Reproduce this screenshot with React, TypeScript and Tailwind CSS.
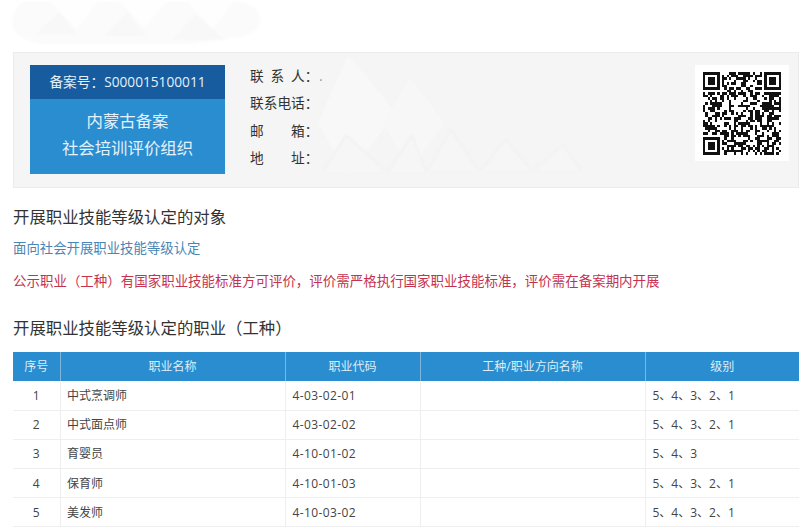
const FONT = "font-['Open_Sans','Noto_Sans_CJK_SC',sans-serif]";

const occupations = [
    { no: 1, name: '中式烹调师', code: '4-03-02-01', levels: '5、4、3、2、1' },
    { no: 2, name: '中式面点师', code: '4-03-02-02', levels: '5、4、3、2、1' },
    { no: 3, name: '育婴员', code: '4-10-01-02', levels: '5、4、3' },
    { no: 4, name: '保育师', code: '4-10-01-03', levels: '5、4、3、2、1' },
    { no: 5, name: '美发师', code: '4-10-03-02', levels: '5、4、3、2、1' },
];

const contacts = [
    { label: '联\u2002系\u2002人\uFF1A', value: '.' },
    { label: '联系电话\uFF1A', value: '' },
    { label: '邮\u3000\u3000箱\uFF1A', value: '' },
    { label: '地\u3000\u3000址\uFF1A', value: '' },
];

// 二维码 모듈 - 고정 시드로 생성
const QR_SIZE = 33;

const isFinder = (x: number, y: number) =>
    (x < 8 && y < 8) || (x >= QR_SIZE - 8 && y < 8) || (x < 8 && y >= QR_SIZE - 8);

const finderOn = (x: number, y: number) => {
    const fx = x >= QR_SIZE - 8 ? x - (QR_SIZE - 7) : x;
    const fy = y >= QR_SIZE - 8 ? y - (QR_SIZE - 7) : y;
    if (fx < 0 || fy < 0 || fx > 6 || fy > 6) return false;
    if (fx === 0 || fy === 0 || fx === 6 || fy === 6) return true;
    return fx >= 2 && fx <= 4 && fy >= 2 && fy <= 4;
};

const qrModules = () => {
    const cells: { x: number; y: number }[] = [];
    let seed = 20240511;
    for (let y = 0; y < QR_SIZE; y++) {
        for (let x = 0; x < QR_SIZE; x++) {
            seed = (seed * 1103515245 + 12345) & 0x7fffffff;
            const on = isFinder(x, y) ? finderOn(x, y) : (seed >> 16) % 100 < 52;
            if (on) cells.push({ x, y });
        }
    }
    return cells;
};

const QrCode = () => (
    <div className="flex h-[96px] w-[94px] shrink-0 items-center justify-center bg-white">
        <svg
            viewBox={`0 0 ${QR_SIZE} ${QR_SIZE}`}
            width="78"
            height="83"
            preserveAspectRatio="none"
            shapeRendering="crispEdges"
            className="blur-[0.4px]"
        >
            {qrModules().map((c) => (
                <rect key={`${c.x}-${c.y}`} x={c.x} y={c.y} width="1" height="1" fill="#111" />
            ))}
        </svg>
    </div>
);

// 카드 뒤 옅은 삼각형 무늬
const CardPattern = () => (
    <svg
        className="pointer-events-none absolute left-[300px] top-0 blur-[1px]"
        width="300"
        height="135"
        viewBox="0 0 300 135"
    >
        <path d="M34 2 L82 60 L34 122 L4 70Z" fill="#f8f8f8" />
        <path d="M96 24 L130 70 L96 118 L70 70Z" fill="#f7f7f7" />
        <g fill="#f6f6f6" stroke="#f0f0f0" strokeWidth="1.5">
            <path d="M9 119 L32 82 L72 119" />
            <path d="M74 119 L98 82 L112 119" />
            <path d="M114 117 L137 77 L164 117" />
            <path d="M167 117 L192 87 L217 117" />
            <path d="M220 117 L249 92 L267 117" />
        </g>
    </svg>
);

// 상단 옅은 워터마크
const TopWatermark = () => (
    <svg
        className="pointer-events-none absolute left-0 top-0 blur-[1px]"
        width="270"
        height="48"
        viewBox="0 0 270 48"
    >
        <path d="M22 2 H240 Q262 6 260 22 Q256 36 232 38 L190 44 H40 Q10 38 12 20 Q14 8 22 2Z" fill="#fbfbfb" />
        <path d="M48 0 L76 30 L100 0Z" fill="#fefefe" />
        <path d="M118 0 L144 28 L168 0Z" fill="#fefefe" />
        <path d="M186 0 L212 30 L236 0Z" fill="#fefefe" />
        <path d="M36 34 L60 12 L76 34Z" fill="#f8f8f8" />
        <path d="M104 36 L128 12 L146 36Z" fill="#f8f8f8" />
        <path d="M172 40 L196 14 L224 40Z" fill="#f8f8f8" />
    </svg>
);

const Header = ({ children, className = '' }: { children: React.ReactNode; className?: string }) => (
    <th className={`border-r border-[#7db7de] bg-[#2a8dd0] text-[12px] font-normal text-[#dcedf8] ${className}`}>
        {children}
    </th>
);

const Cell = ({ children, className = '' }: { children?: React.ReactNode; className?: string }) => (
    <td className={`border-r border-b border-[#eeeeee] pt-[1px] text-[12px] text-[#444] ${className}`}>{children}</td>
);

export default function App() {
    return (
        <div className={`relative h-[527px] w-[800px] overflow-hidden bg-white pl-[13px] pt-[52px] ${FONT}`}>
            <TopWatermark />

            <div className="relative flex h-[136px] w-[786px] items-start border border-[#ebebeb] bg-[#f5f5f5] pl-[16px] pr-[9px] pt-[12px]">
                <CardPattern />
                <div className="relative flex h-[109px] w-[195px] shrink-0 flex-col bg-[#2a8dd0] text-center text-[#e4f1fa]">
                    <div className="flex h-[34px] items-center justify-center bg-[#175c9f] text-[13.7px]">
                        {'备案号\uFF1AS000015100011'}
                    </div>
                    <div className="flex flex-1 flex-col items-center justify-center pb-[5px] text-[16.4px] leading-[27px]">
                        <p>内蒙古备案</p>
                        <p>社会培训评价组织</p>
                    </div>
                </div>

                <ul className="relative ml-[25px] flex flex-col gap-[5.3px] text-[13.7px] leading-[22px] text-[#333]">
                    {contacts.map((c) => (
                        <li key={c.label} className="flex whitespace-pre">
                            <span className="w-[69px]">{c.label}</span>
                            <span className="text-[#999]">{c.value}</span>
                        </li>
                    ))}
                </ul>

                <div className="relative ml-auto">
                    <QrCode />
                </div>
            </div>

            <h2 className="mt-[18px] text-[16.4px] leading-[22px] text-[#333]">开展职业技能等级认定的对象</h2>
            <p className="mt-[10px] text-[13.4px] leading-[20px] text-[#4a85b5]">面向社会开展职业技能等级认定</p>
            <p className="mt-[13px] text-[13.47px] leading-[20px] text-[#c5324f]">
                {'公示职业\uFF08工种\uFF09有国家职业技能标准方可评价\uFF0C评价需严格执行国家职业技能标准\uFF0C评价需在备案期内开展'}
            </p>
            <h2 className="mt-[26px] text-[16.4px] leading-[22px] text-[#333]">
                {'开展职业技能等级认定的职业\uFF08工种\uFF09'}
            </h2>

            <table className="mt-[13px] w-[786px] table-fixed border-collapse">
                <colgroup>
                    <col className="w-[47px]" />
                    <col className="w-[225px]" />
                    <col className="w-[135px]" />
                    <col className="w-[225px]" />
                    <col />
                </colgroup>
                <thead>
                    <tr className="h-[29px]">
                        <Header>序号</Header>
                        <Header>职业名称</Header>
                        <Header>职业代码</Header>
                        <Header>工种/职业方向名称</Header>
                        <Header className="border-r-0">级别</Header>
                    </tr>
                </thead>
                <tbody>
                    {occupations.map((o) => (
                        <tr key={o.no} className="h-[29.2px]">
                            <Cell className="text-center">{o.no}</Cell>
                            <Cell className="pl-[6.5px]">{o.name}</Cell>
                            <Cell className="pl-[7px] tracking-[0.4px]">{o.code}</Cell>
                            <Cell />
                            <Cell className="border-r-0 pl-[7px]">{o.levels}</Cell>
                        </tr>
                    ))}
                </tbody>
            </table>
        </div>
    );
}
